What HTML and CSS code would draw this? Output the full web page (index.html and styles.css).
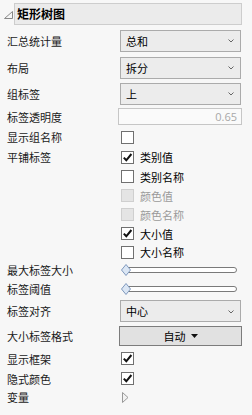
FILE: index.html
```html
<!DOCTYPE html>
<html lang="zh">
<head>
<meta charset="utf-8">
<link rel="stylesheet" href="styles.css">
</head>
<body>
<div class="panel">
  <div class="head">
    <svg class="tri" width="9" height="8" viewBox="0 0 9 8"><path d="M0.5 7.5 L8.5 0.5 L8.5 7.5 Z" fill="none" stroke="#888" stroke-width="1"/></svg>
    <div class="title">矩形树图</div>
  </div>

  <div class="row h27">
    <div class="lbl">汇总统计量</div>
    <div class="ctl"><div class="dd"><span>总和</span><svg class="chev" width="6" height="4" viewBox="0 0 6 4"><path d="M0.5 0.5 L3 3 L5.5 0.5" fill="none" stroke="#666" stroke-width="1"/></svg></div></div>
  </div>
  <div class="row h27">
    <div class="lbl">布局</div>
    <div class="ctl"><div class="dd"><span>拆分</span><svg class="chev" width="6" height="4" viewBox="0 0 6 4"><path d="M0.5 0.5 L3 3 L5.5 0.5" fill="none" stroke="#666" stroke-width="1"/></svg></div></div>
  </div>
  <div class="row h25">
    <div class="lbl">组标签</div>
    <div class="ctl"><div class="dd"><span>上</span><svg class="chev" width="6" height="4" viewBox="0 0 6 4"><path d="M0.5 0.5 L3 3 L5.5 0.5" fill="none" stroke="#666" stroke-width="1"/></svg></div></div>
  </div>
  <div class="row h21">
    <div class="lbl">标签透明度</div>
    <div class="ctl"><div class="inp">0.65</div></div>
  </div>
  <div class="row h20">
    <div class="lbl">显示组名称</div>
    <div class="ctl"><span class="cb"></span></div>
  </div>
  <div class="group">
    <div class="lbl glbl">平铺标签</div>
    <div class="ctl list">
      <div class="item h20"><span class="cb on"><svg width="11" height="11" viewBox="0 0 11 11"><path d="M1.8 5.6 L4.3 8.3 L9.4 2" fill="none" stroke="#111" stroke-width="2"/></svg></span><span class="txt">类别值</span></div>
      <div class="item h19"><span class="cb"></span><span class="txt">类别名称</span></div>
      <div class="item h19"><span class="cb dis"></span><span class="txt dtxt">颜色值</span></div>
      <div class="item h19"><span class="cb dis"></span><span class="txt dtxt">颜色名称</span></div>
      <div class="item h19"><span class="cb on"><svg width="11" height="11" viewBox="0 0 11 11"><path d="M1.8 5.6 L4.3 8.3 L9.4 2" fill="none" stroke="#111" stroke-width="2"/></svg></span><span class="txt">大小值</span></div>
      <div class="item h18"><span class="cb"></span><span class="txt">大小名称</span></div>
    </div>
  </div>
  <div class="row h18">
    <div class="lbl">最大标签大小</div>
    <div class="ctl"><div class="slider"><div class="track"></div><svg class="thumb" width="10" height="12" viewBox="0 0 10 12"><path d="M5 0.5 L9.5 6 L5 11.5 L0.5 6 Z" fill="#dbe6f4" stroke="#7e98bd" stroke-width="1"/></svg></div></div>
  </div>
  <div class="row h19">
    <div class="lbl">标签阈值</div>
    <div class="ctl"><div class="slider"><div class="track"></div><svg class="thumb" width="10" height="12" viewBox="0 0 10 12"><path d="M5 0.5 L9.5 6 L5 11.5 L0.5 6 Z" fill="#dbe6f4" stroke="#7e98bd" stroke-width="1"/></svg></div></div>
  </div>
  <div class="row h26">
    <div class="lbl">标签对齐</div>
    <div class="ctl"><div class="dd"><span>中心</span><svg class="chev" width="6" height="4" viewBox="0 0 6 4"><path d="M0.5 0.5 L3 3 L5.5 0.5" fill="none" stroke="#666" stroke-width="1"/></svg></div></div>
  </div>
  <div class="row h24">
    <div class="lbl">大小标签格式</div>
    <div class="ctl"><div class="btn"><span>自动</span><svg width="7" height="4" viewBox="0 0 7 4"><path d="M0 0 L7 0 L3.5 4 Z" fill="#111"/></svg></div></div>
  </div>
  <div class="row h21">
    <div class="lbl">显示框架</div>
    <div class="ctl"><span class="cb on"><svg width="11" height="11" viewBox="0 0 11 11"><path d="M1.8 5.6 L4.3 8.3 L9.4 2" fill="none" stroke="#111" stroke-width="2"/></svg></span></div>
  </div>
  <div class="row h19">
    <div class="lbl">隐式颜色</div>
    <div class="ctl"><span class="cb on"><svg width="11" height="11" viewBox="0 0 11 11"><path d="M1.8 5.6 L4.3 8.3 L9.4 2" fill="none" stroke="#111" stroke-width="2"/></svg></span></div>
  </div>
  <div class="row h18">
    <div class="lbl">变量</div>
    <div class="ctl"><svg class="disc" width="7" height="11" viewBox="0 0 7 11"><path d="M0.5 0.5 L6 5.5 L0.5 10.5 Z" fill="#f2f2f2" stroke="#999" stroke-width="1"/></svg></div>
  </div>
</div>
</body>
</html>
```

FILE: styles.css
```css
html, body {
  margin: 0;
  padding: 0;
  background: #f7f7f7;
}
body {
  width: 252px;
  height: 415px;
  font-family: "Noto Sans CJK SC", "Liberation Sans", sans-serif;
  font-size: 11px;
  color: #1a1a1a;
}
.panel {
  padding-top: 3px;
}
.head {
  display: flex;
  align-items: flex-start;
  height: 22px;
  margin-bottom: 2px;
}
.tri {
  margin: 8px 0 0 4px;
}
.title {
  box-sizing: border-box;
  margin-left: 1px;
  width: 228px;
  height: 22px;
  background: #ebebeb;
  border: 1px solid #cdcdcd;
  font-weight: bold;
  font-size: 12px;
  line-height: 19px;
  padding-left: 2px;
  color: #000;
}
.row {
  display: flex;
  align-items: center;
}
.lbl {
  width: 111px;
  padding-left: 7px;
  flex: none;
  white-space: nowrap;
  line-height: 14px;
}
.ctl {
  display: flex;
  align-items: center;
  flex: 1;
  padding-right: 11px;
}
.h18 { height: 18px; }
.h19 { height: 19px; }
.h20 { height: 20px; }
.h21 { height: 21px; }
.h24 { height: 24px; }
.h25 { height: 25px; }
.h26 { height: 26px; }
.h27 { height: 27px; }

.dd {
  box-sizing: border-box;
  margin-left: 2px;
  width: 121px;
  height: 22px;
  border: 1px solid #ababab;
  background: #ececec;
  display: flex;
  align-items: center;
  justify-content: space-between;
  padding: 0 6px 0 5px;
  color: #000;
}
.chev { margin-top: 1px; }
.inp {
  box-sizing: border-box;
  width: 124px;
  height: 17px;
  border: 1px solid #c6c6c6;
  background: #fafafa;
  color: #a8a8a8;
  text-align: right;
  padding-right: 4px;
  line-height: 15px;
  font-family: "Open Sans", "Liberation Sans", sans-serif;
  font-size: 11px;
  margin-right: -2px;
}
.cb {
  box-sizing: border-box;
  display: inline-flex;
  align-items: center;
  justify-content: center;
  width: 13px;
  height: 13px;
  margin-left: 3px;
  border: 1px solid #707070;
  background: #fff;
  flex: none;
}
.cb.dis {
  border-color: #cfcfcf;
  background: #e4e4e4;
}
.group {
  display: flex;
  align-items: flex-start;
}
.glbl {
  height: 20px;
  display: flex;
  align-items: center;
}
.list {
  flex-direction: column;
  align-items: stretch;
}
.item {
  display: flex;
  align-items: center;
}
.txt {
  margin-left: 6px;
  color: #000;
}
.dtxt {
  color: #9a9a9a;
}
.slider {
  position: relative;
  width: 118px;
  height: 12px;
  margin-left: 1px;
}
.track {
  position: absolute;
  left: 4px;
  right: 0;
  top: 3px;
  height: 6px;
  box-sizing: border-box;
  border: 1px solid #7a7a7a;
  border-radius: 3px;
  background: #fff;
}
.thumb {
  position: absolute;
  left: 2px;
  top: 0;
}
.btn {
  box-sizing: border-box;
  width: 123px;
  height: 20px;
  margin-left: 1px;
  margin-right: -1px;
  border: 1px solid #7c7c7c;
  background: #e1e1e1;
  display: flex;
  align-items: center;
  justify-content: center;
  gap: 5px;
  color: #000;
}
.disc {
  margin-left: 4px;
}
```
